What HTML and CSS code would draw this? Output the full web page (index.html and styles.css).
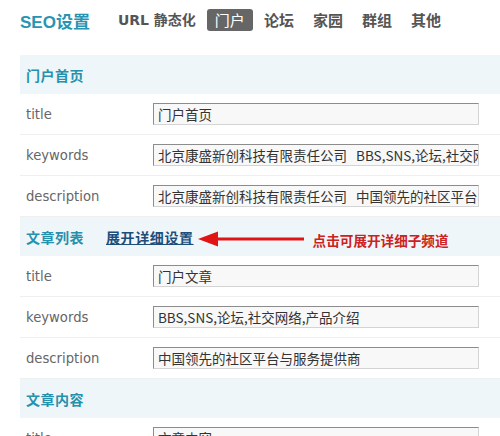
FILE: index.html
```html
<!DOCTYPE html>
<html lang="zh-CN">
<head>
<meta charset="utf-8">
<title>SEO设置</title>
<link rel="stylesheet" href="styles.css">
</head>
<body>
<div class="nav">
  <span class="nav-title">SEO设置</span>
  <span class="nav-item nav-url">URL 静态化</span>
  <span class="nav-item active">门户</span>
  <span class="nav-item">论坛</span>
  <span class="nav-item">家园</span>
  <span class="nav-item">群组</span>
  <span class="nav-item">其他</span>
</div>
<div class="panel">
  <div class="band"><span class="band-title">门户首页</span></div>
  <div class="row"><span class="label">title</span><input class="field" value="门户首页"></div>
  <div class="row"><span class="label">keywords</span><input class="field" value="北京康盛新创科技有限责任公司   BBS,SNS,论坛,社交网络,产品介绍"></div>
  <div class="row"><span class="label">description</span><input class="field" value="北京康盛新创科技有限责任公司   中国领先的社区平台与服务提供商"></div>

  <div class="band">
    <span class="band-title">文章列表</span>
    <a class="expand" href="#">展开详细设置</a>
    <svg class="arrow" width="106" height="18" viewBox="0 0 106 18">
      <polygon points="0,9 20,1.5 20,16.5" fill="#e01414"/>
      <rect x="18" y="7.5" width="88" height="3" fill="#e01414"/>
    </svg>
    <span class="note">点击可展开详细子频道</span>
  </div>
  <div class="row"><span class="label">title</span><input class="field" value="门户文章"></div>
  <div class="row"><span class="label">keywords</span><input class="field" value="BBS,SNS,论坛,社交网络,产品介绍"></div>
  <div class="row"><span class="label">description</span><input class="field" value="中国领先的社区平台与服务提供商"></div>

  <div class="band"><span class="band-title">文章内容</span></div>
  <div class="row"><span class="label">title</span><input class="field" value="文章内容"></div>
</div>
</body>
</html>
```
FILE: styles.css
```css
html, body {
  margin: 0;
  padding: 0;
  background: #ffffff;
}
body {
  font-family: "DejaVu Sans", "Noto Sans CJK SC", sans-serif;
  width: 500px;
  height: 436px;
  overflow: hidden;
}
.nav {
  display: flex;
  align-items: center;
  height: 22px;
  padding: 9px 0 0 20px;
  margin-bottom: 24px;
  font-family: "Noto Sans CJK SC", sans-serif;
  gap: 3px;
}
.nav-title {
  font-family: "Liberation Sans", "Noto Sans CJK SC", sans-serif;
  font-weight: bold;
  font-size: 17px;
  color: #2894b2;
  margin-right: 17px;
}
.nav-item {
  font-size: 15px;
  font-weight: bold;
  color: #555555;
  padding: 0 8px;
  line-height: 22px;
  border-radius: 3px;
}
.nav-url {
  font-family: "DejaVu Sans", "Noto Sans CJK SC", sans-serif;
  font-size: 14px;
}
.nav-item.active {
  background: #666666;
  color: #ffffff;
  font-weight: normal;
}
.panel {
  margin-left: 20px;
  width: 480px;
}
.band {
  display: flex;
  align-items: center;
  height: 39px;
  background: #eff6fa;
  padding-left: 6px;
  font-family: "Noto Sans CJK SC", sans-serif;
}
.band-title {
  font-size: 14px;
  font-weight: bold;
  color: #2591ac;
  letter-spacing: 0.5px;
}
.expand {
  margin-left: 22px;
  font-size: 14px;
  font-weight: bold;
  color: #1d4e7a;
  text-decoration: underline;
  letter-spacing: 0.6px;
}
.arrow {
  margin-left: 4px;
  margin-top: 5px;
}
.note {
  margin-left: 9px;
  margin-top: 6px;
  font-size: 13.6px;
  font-weight: bold;
  color: #cc2222;
}
.row {
  display: flex;
  align-items: center;
  height: 40px;
  border-bottom: 1px solid #efefef;
  padding-left: 6px;
}
.label {
  width: 127px;
  font-size: 13.2px;
  color: #666666;
}
.field {
  box-sizing: border-box;
  width: 326px;
  height: 22px;
  margin: 0;
  padding: 0 0 0 4px;
  border-style: solid;
  border-width: 1px;
  border-color: #8c8c8c #d4d4d4 #d4d4d4 #8c8c8c;
  background: #f8f8f8;
  font-family: "Noto Sans CJK SC", sans-serif;
  font-size: 13.5px;
  color: #333333;
  outline: none;
}
```
